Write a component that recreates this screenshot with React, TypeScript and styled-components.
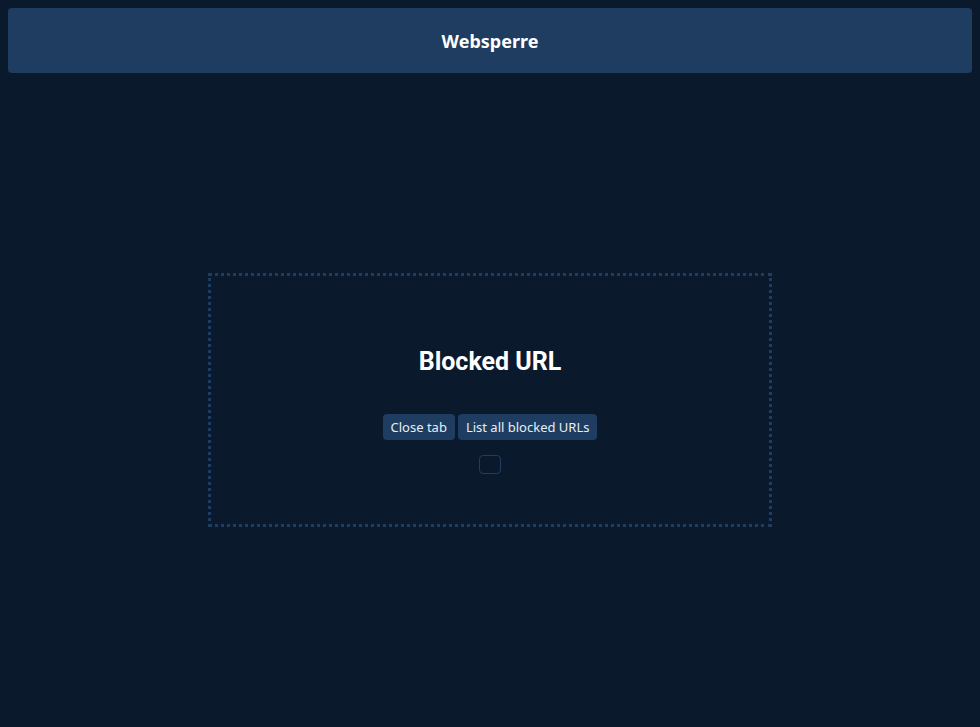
import React from "react";
import styled, { createGlobalStyle } from "styled-components";

const Global = createGlobalStyle`
  html, body { margin: 0; padding: 0; }
  body {
    margin: 8px;
    background: #0b192c;
    color: #ffffff;
    font-family: "Noto Sans", "DejaVu Sans", sans-serif;
  }
`;

const Page = styled.div`
  display: flex;
  flex-direction: column;
  height: calc(100vh - 8px);
`;

const Header = styled.header`
  height: 65px;
  background: #1e3d60;
  border-radius: 4px;
  display: flex;
  align-items: center;
  justify-content: center;
  font-family: "Noto Sans", sans-serif;
  font-weight: bold;
  font-size: 18px;
  color: #ffffff;
`;

const Main = styled.main`
  flex: 1;
  display: flex;
  align-items: center;
  justify-content: center;
`;

const Panel = styled.section`
  box-sizing: border-box;
  width: 564px;
  height: 254px;
  border: 3px dotted #1e3d60;
  display: flex;
  flex-direction: column;
  align-items: center;
  padding-top: 69px;
`;

const Title = styled.h1`
  margin: 0;
  font-family: "Roboto", sans-serif;
  font-size: 25px;
  font-weight: bold;
  line-height: 34px;
  color: #ffffff;
`;

const Actions = styled.div`
  display: flex;
  gap: 3px;
  margin-top: 35px;
`;

const Button = styled.button`
  height: 26px;
  padding: 0 8px;
  border: none;
  border-radius: 4px;
  background: #1e3d60;
  color: #e8eef5;
  font-family: "Noto Sans", sans-serif;
  font-size: 13px;
  cursor: pointer;
`;

const Empty = styled.div`
  box-sizing: border-box;
  width: 22px;
  height: 19px;
  margin-top: 15px;
  border: 1px solid #1e3d60;
  border-radius: 4px;
`;

export default function App() {
  return (
    <>
      <Global />
      <Page>
        <Header>Websperre</Header>
        <Main>
          <Panel>
            <Title>Blocked URL</Title>
            <Actions>
              <Button>Close tab</Button>
              <Button>List all blocked URLs</Button>
            </Actions>
            <Empty />
          </Panel>
        </Main>
      </Page>
    </>
  );
}
